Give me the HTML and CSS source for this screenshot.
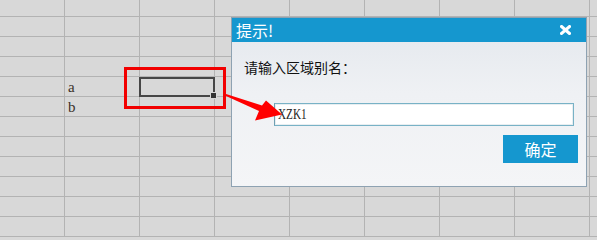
FILE: index.html
```html
<!DOCTYPE html>
<html>
<head>
<meta charset="utf-8">
<link rel="stylesheet" href="styles.css">
</head>
<body>
<div class="sheet">
  <div class="row first">
    <div class="cell c0"></div><div class="cell"></div><div class="cell"></div><div class="cell"></div><div class="cell"></div><div class="cell"></div><div class="cell"></div><div class="cell"></div><div class="cell"></div>
  </div>
  <div class="row"><div class="cell c0"></div><div class="cell"></div><div class="cell"></div><div class="cell"></div><div class="cell"></div><div class="cell"></div><div class="cell"></div><div class="cell"></div><div class="cell"></div></div>
  <div class="row"><div class="cell c0"></div><div class="cell"></div><div class="cell"></div><div class="cell"></div><div class="cell"></div><div class="cell"></div><div class="cell"></div><div class="cell"></div><div class="cell"></div></div>
  <div class="row"><div class="cell c0"></div><div class="cell"></div><div class="cell"></div><div class="cell"></div><div class="cell"></div><div class="cell"></div><div class="cell"></div><div class="cell"></div><div class="cell"></div></div>
  <div class="row"><div class="cell c0"></div><div class="cell txt">a</div><div class="cell"></div><div class="cell"></div><div class="cell"></div><div class="cell"></div><div class="cell"></div><div class="cell"></div><div class="cell"></div></div>
  <div class="row"><div class="cell c0"></div><div class="cell txt">b</div><div class="cell"></div><div class="cell"></div><div class="cell"></div><div class="cell"></div><div class="cell"></div><div class="cell"></div><div class="cell"></div></div>
  <div class="row"><div class="cell c0"></div><div class="cell"></div><div class="cell"></div><div class="cell"></div><div class="cell"></div><div class="cell"></div><div class="cell"></div><div class="cell"></div><div class="cell"></div></div>
  <div class="row"><div class="cell c0"></div><div class="cell"></div><div class="cell"></div><div class="cell"></div><div class="cell"></div><div class="cell"></div><div class="cell"></div><div class="cell"></div><div class="cell"></div></div>
  <div class="row"><div class="cell c0"></div><div class="cell"></div><div class="cell"></div><div class="cell"></div><div class="cell"></div><div class="cell"></div><div class="cell"></div><div class="cell"></div><div class="cell"></div></div>
  <div class="row"><div class="cell c0"></div><div class="cell"></div><div class="cell"></div><div class="cell"></div><div class="cell"></div><div class="cell"></div><div class="cell"></div><div class="cell"></div><div class="cell"></div></div>
  <div class="row"><div class="cell c0"></div><div class="cell"></div><div class="cell"></div><div class="cell"></div><div class="cell"></div><div class="cell"></div><div class="cell"></div><div class="cell"></div><div class="cell"></div></div>
  <div class="row"><div class="cell c0"></div><div class="cell"></div><div class="cell"></div><div class="cell"></div><div class="cell"></div><div class="cell"></div><div class="cell"></div><div class="cell"></div><div class="cell"></div></div>
</div>

<div class="selected"><span class="handle"></span></div>
<div class="highlight"></div>
<svg class="arrow" width="597" height="211" viewBox="0 0 597 211">
  <polygon points="226,94 262,105.5 266,100.5 282,114.5 255,120.5 259,111 226,96" fill="#f00"/>
</svg>

<div class="dialog">
  <div class="titlebar">
    <span class="title">提示!</span>
    <svg class="close" width="11" height="10" viewBox="0 0 11 10">
      <path d="M1.5 1.5 L9.5 8.5 M9.5 1.5 L1.5 8.5" stroke="#fff" stroke-width="3" stroke-linecap="square"/>
    </svg>
  </div>
  <div class="dbody">
    <div class="label">请输入区域别名：</div>
    <div class="input"><span class="val">XZK1</span></div>
    <div class="actions"><div class="btn">确定</div></div>
  </div>
</div>
</body>
</html>
```

FILE: styles.css
```css
html, body {
  margin: 0;
  padding: 0;
  background: #d8d8d8;
}

body {
  overflow: hidden;
}

.sheet {
  display: flex;
  flex-direction: column;
  width: 100vw;
  min-width: 597px;
  height: 100vh;
  min-height: 211px;
  overflow: hidden;
}

.row {
  display: flex;
  flex: none;
  height: 20px;
}

.row.first {
  height: 17px;
}

.cell {
  box-sizing: border-box;
  width: 75px;
  flex: none;
  border-right: 1px solid #b3b3b3;
  border-bottom: 1px solid #b3b3b3;
}

.cell.c0 {
  width: 65px;
}

.txt {
  font-family: "Liberation Serif", serif;
  font-size: 15px;
  line-height: 20px;
  color: #3a3028;
  padding-left: 3px;
}

.selected {
  position: absolute;
  left: 139px;
  top: 77px;
  width: 76px;
  height: 20px;
  box-sizing: border-box;
  border: 2px solid #464646;
}

.handle {
  position: absolute;
  right: -4px;
  bottom: -4px;
  width: 5px;
  height: 5px;
  background: #333;
  border: 1px solid #d8d8d8;
}

.highlight {
  position: absolute;
  left: 124px;
  top: 67px;
  width: 102px;
  height: 42px;
  box-sizing: border-box;
  border: 3px solid #f20000;
}

.arrow {
  position: absolute;
  left: 0;
  top: 0;
  z-index: 3;
}

.dialog {
  position: absolute;
  left: 231px;
  top: 17px;
  width: 356px;
  height: 170px;
  box-sizing: border-box;
  border: 1px solid #8ea2b2;
  display: flex;
  flex-direction: column;
  background: linear-gradient(#e3e7ed 0%, #eff1f4 45%, #f4f5f7 100%);
  z-index: 2;
}

.titlebar {
  height: 24px;
  background: #1597cf;
  display: flex;
  align-items: center;
  justify-content: space-between;
  padding: 0 15px 0 4px;
}

.title {
  font-family: "Noto Sans CJK SC", sans-serif;
  font-size: 16px;
  line-height: 24px;
  color: #fff;
}

.close {
  display: block;
}

.dbody {
  flex: 1;
  display: flex;
  flex-direction: column;
  padding: 15px 8px 0 12px;
}

.label {
  font-family: "Noto Sans CJK SC", sans-serif;
  font-size: 14px;
  line-height: 20px;
  color: #111;
}

.input {
  margin: 26px 4px 0 30px;
  height: 23px;
  box-sizing: border-box;
  border: 1px solid #78b2c6;
  border-left-color: #6f9fb2;
  box-shadow: inset 0 0 0 1px #e8eef1;
  background: #fff;
  font-family: "Liberation Serif", serif;
  font-size: 14px;
  line-height: 21px;
  padding-left: 3px;
  color: #222;
}

.val {
  display: inline-block;
  transform: scaleX(0.8);
  transform-origin: left center;
}

.actions {
  display: flex;
  justify-content: flex-end;
  margin-top: 9px;
}

.btn {
  width: 75px;
  height: 28px;
  background: #1597cf;
  color: #fff;
  font-family: "Noto Sans CJK SC", sans-serif;
  font-size: 16px;
  line-height: 28px;
  text-align: center;
}
```
